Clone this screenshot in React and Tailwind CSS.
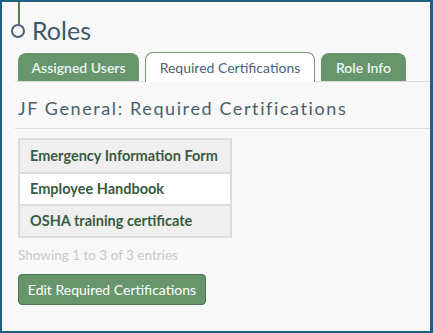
import React from 'react';

const rows = ['Emergency Information Form', 'Employee Handbook', 'OSHA training certificate'];

function App() {
  return (
    <div className="w-[433px] h-[333px] bg-[#1f5f80] p-[2px] pr-[3px] font-['Lato',sans-serif]">
      <div className="w-full h-full bg-[#f8f8f8] relative">
        {/* timeline marker */}
        <div className="absolute left-[16px] top-0 w-[2px] h-[22px] bg-[#55805a]" />
        <div className="absolute left-[9px] top-[22px] w-[14px] h-[14px] rounded-full border-[2px] border-[#4a6670] bg-[#f8f8f8]" />

        <div className="pl-[30px] pt-[13px] text-[25px] leading-[30px] text-[#3e5866]">Roles</div>

        <div className="mt-[7px] ml-[13px] pl-[3px] flex items-end gap-[6px] border-b border-[#dddddd] h-[30px]">
          <div className="w-[121px] h-[28px] bg-[#68966c] rounded-t-[8px] flex items-center justify-center text-[14px] font-semibold text-[#eef4ee]">Assigned Users</div>
          <div className="w-[170px] h-[30px] -mb-px bg-white border border-b-0 border-[#6f9a72] rounded-t-[8px] flex items-center justify-center text-[14px] text-[#4b6575]">Required Certifications</div>
          <div className="w-[85px] h-[28px] bg-[#68966c] rounded-t-[8px] flex items-center justify-center text-[14px] font-semibold text-[#eef4ee]">Role Info</div>
        </div>

        <div className="ml-[13px] pl-[3px] pt-[14px] pb-[8px] border-b border-[#dddddd] text-[18px] leading-[24px] tracking-[1.6px] text-[#4a5f6d]">
          JF General: Required Certifications
        </div>

        <div className="ml-[16px] mt-[9px] w-[214px] border-2 border-[#dcdcdc]">
          {rows.map((r, i) => (
            <div
              key={r}
              className={`h-[32px] flex items-center px-[10px] text-[14.5px] font-bold text-[#3b5b3f] ${i > 0 ? 'border-t-2 border-[#dcdcdc]' : ''} ${i === 1 ? 'bg-white' : 'bg-[#efefef]'}`}
            >
              {r}
            </div>
          ))}
        </div>

        <div className="ml-[16px] mt-[7px] text-[13.5px] text-[#c9c9c9]">Showing 1 to 3 of 3 entries</div>

        <button className="ml-[16px] mt-[9px] w-[188px] h-[31px] bg-[#68966c] border border-[#4d7752] rounded-[4px] text-[14px] text-white">
          Edit Required Certifications
        </button>
      </div>
    </div>
  );
}

export default App;
